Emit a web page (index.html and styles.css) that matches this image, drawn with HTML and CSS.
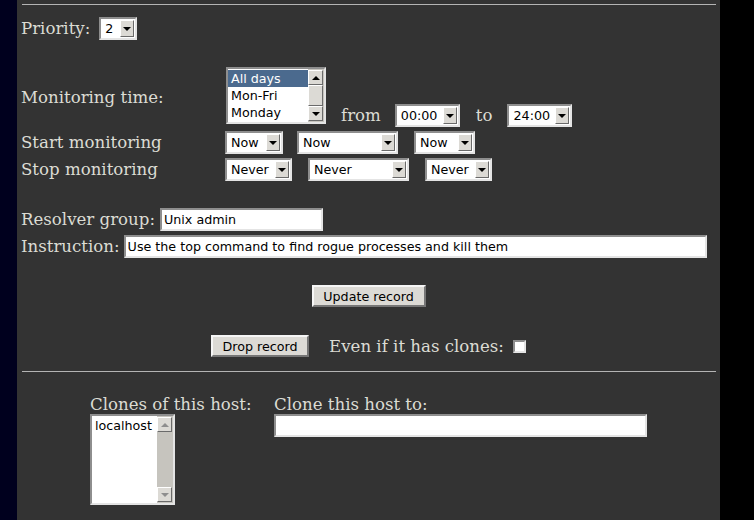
FILE: index.html
```html
<!DOCTYPE html>
<html lang="en">
<head>
<meta charset="utf-8">
<title>Host record</title>
<link rel="stylesheet" href="styles.css">
</head>
<body>
<div class="screen">
  <div class="side-left"></div>
  <main class="page">
    <hr class="rule">

    <div class="line priority-line">
      <span class="label">Priority:</span>
      <span class="combo w-priority"><select class="combo-select"><option>2</option></select><span class="combo-btn"></span></span>
    </div>

    <div class="schedule">
      <span class="label">Monitoring time:</span>
      <div class="controls controls-time">
        <div class="listbox days">
          <ul class="listbox-items">
            <li class="is-selected">All days</li>
            <li>Mon-Fri</li>
            <li>Monday</li>
          </ul>
          <div class="scrollbar">
            <span class="sb-btn sb-up"></span>
            <span class="sb-thumb"></span>
            <span class="sb-btn sb-down"></span>
          </div>
        </div>
        <span class="word word-from">from</span>
        <span class="combo w-time"><select class="combo-select"><option>00:00</option></select><span class="combo-btn"></span></span>
        <span class="word word-to">to</span>
        <span class="combo w-time"><select class="combo-select"><option>24:00</option></select><span class="combo-btn"></span></span>
      </div>

      <span class="label">Start monitoring</span>
      <div class="controls controls-start">
        <span class="combo w-now1"><select class="combo-select"><option>Now</option></select><span class="combo-btn"></span></span>
        <span class="combo w-mid"><select class="combo-select"><option>Now</option></select><span class="combo-btn"></span></span>
        <span class="combo w-now3"><select class="combo-select"><option>Now</option></select><span class="combo-btn"></span></span>
      </div>

      <span class="label">Stop monitoring</span>
      <div class="controls">
        <span class="combo w-never"><select class="combo-select"><option>Never</option></select><span class="combo-btn"></span></span>
        <span class="combo w-mid"><select class="combo-select"><option>Never</option></select><span class="combo-btn"></span></span>
        <span class="combo w-never"><select class="combo-select"><option>Never</option></select><span class="combo-btn"></span></span>
      </div>
    </div>

    <div class="line resolver-line">
      <span class="label">Resolver group:</span>
      <input class="field w-resolver" type="text" value="Unix admin">
    </div>
    <div class="line instruction-line">
      <span class="label">Instruction:</span>
      <input class="field w-instruction" type="text" value="Use the top command to find rogue processes and kill them">
    </div>

    <div class="center-line update-line">
      <button class="btn btn-update" type="button">Update record</button>
    </div>

    <div class="center-line drop-line">
      <button class="btn btn-drop" type="button">Drop record</button>
      <span class="label drop-note">Even if it has clones:</span>
      <span class="checkbox"></span>
    </div>

    <hr class="rule rule-lower">

    <div class="clones">
      <div class="clones-col col-list">
        <span class="label">Clones of this host:</span>
        <div class="listbox hosts">
          <ul class="listbox-items">
            <li>localhost</li>
          </ul>
          <div class="scrollbar">
            <span class="sb-btn sb-up is-disabled"></span>
            <span class="sb-trough"></span>
            <span class="sb-btn sb-down is-disabled"></span>
          </div>
        </div>
      </div>
      <div class="clones-col col-target">
        <span class="label">Clone this host to:</span>
        <input class="field w-clone" type="text" value="">
      </div>
    </div>
  </main>
  <div class="side-right"></div>
</div>
</body>
</html>
```

FILE: styles.css
```css
* { box-sizing: border-box; }

html, body {
  margin: 0;
  padding: 0;
  background: #000;
}

.screen {
  display: flex;
  height: 520px;
  overflow: hidden;
}

.side-left {
  flex: none;
  width: 17px;
  background: #00001e;
}

.side-right {
  flex: 1;
  background: #000;
}

.page {
  flex: none;
  width: 703px;
  background: #333333;
  padding: 4px 4px 0 4px;
  color: #dcdcd4;
  font-family: "DejaVu Serif", serif;
  font-size: 16.6px;
  line-height: 19px;
}

.rule {
  height: 0;
  margin: 0 0 0 1px;
  border: 0;
  border-top: 1px solid #b4b4b4;
}

.label {
  white-space: nowrap;
}

.line {
  display: flex;
  align-items: center;
  gap: 4px;
  height: 23px;
}

.priority-line { margin-top: 12px; gap: 9px; }
.resolver-line { margin-top: 27px; gap: 5px; }
.instruction-line { margin-top: 4px; }

/* schedule grid */
.schedule {
  margin-top: 27px;
  display: grid;
  grid-template-columns: 204px auto;
  row-gap: 4px;
  align-items: center;
}

.controls {
  display: flex;
  align-items: center;
  height: 23px;
  gap: 16px;
}

.controls-start { gap: 14px; }
.controls-start .w-now3 { margin-left: 2px; }

.controls-time {
  height: 60px;
  align-items: flex-end;
  gap: 0;
}

.word { line-height: 23px; }
.word-from { margin: 0 14px 0 15px; }
.word-to { margin: 0 15px 0 16px; }

/* combo boxes */
.combo {
  position: relative;
  display: inline-block;
  flex: none;
  height: 23px;
  background: #fff;
  border: 2px solid;
  border-color: #8e8e8e #e4e4e4 #e4e4e4 #8e8e8e;
}

.combo-select {
  appearance: none;
  -webkit-appearance: none;
  display: block;
  width: 100%;
  height: 100%;
  margin: 0;
  border: 0;
  padding: 0 0 0 4px;
  background: transparent;
  color: #000;
  font-family: "DejaVu Sans", sans-serif;
  font-size: 12.7px;
  outline: none;
}

.combo-btn {
  position: absolute;
  top: 1px;
  right: 1px;
  bottom: 1px;
  width: 14px;
  display: flex;
  align-items: center;
  justify-content: center;
  background: #dcdad5;
  border: 1px solid;
  border-color: #ffffff #6a6a6a #6a6a6a #ffffff;
  pointer-events: none;
}

.combo-btn::before {
  content: "";
  border-left: 4px solid transparent;
  border-right: 4px solid transparent;
  border-top: 4px solid #000;
}

.w-priority { width: 38px; }
.w-time { width: 65px; }
.w-now1 { width: 58px; }
.w-now3 { width: 61px; }
.w-mid { width: 101px; }
.w-never { width: 67px; }

/* list boxes */
.listbox {
  display: flex;
  flex: none;
  background: #fff;
  border: 2px solid;
  border-color: #8e8e8e #e4e4e4 #e4e4e4 #8e8e8e;
}

.days {
  width: 100px;
  height: 57px;
  margin-bottom: 3px;
  margin-left: 1px;
}

.hosts {
  width: 85px;
  height: 91px;
}

.listbox-items {
  flex: 1;
  margin: 0;
  padding: 1px 0 0 0;
  list-style: none;
  font-family: "DejaVu Sans", sans-serif;
  font-size: 12.7px;
  color: #000;
}

.listbox-items li {
  height: 17px;
  line-height: 17px;
  padding-left: 3px;
  white-space: nowrap;
}

.listbox-items li.is-selected {
  background: #4b6a8e;
  color: #fff;
}

.scrollbar {
  flex: none;
  width: 16px;
  display: flex;
  flex-direction: column;
  background: #c6c4be;
  padding: 1px 1px 1px 0;
}

.sb-btn {
  flex: none;
  height: 15px;
  display: flex;
  align-items: center;
  justify-content: center;
  background: #dcdad5;
  border: 1px solid;
  border-color: #ffffff #6a6a6a #6a6a6a #ffffff;
}

.sb-up::before {
  content: "";
  border-left: 4px solid transparent;
  border-right: 4px solid transparent;
  border-bottom: 4px solid #000;
}

.sb-down::before {
  content: "";
  border-left: 4px solid transparent;
  border-right: 4px solid transparent;
  border-top: 4px solid #000;
}

.sb-btn.is-disabled::before { border-top-color: #8e8e8e; border-bottom-color: #8e8e8e; }
.sb-up.is-disabled::before { border-top-color: transparent; }
.sb-down.is-disabled::before { border-bottom-color: transparent; }

.sb-thumb {
  flex: none;
  height: 21px;
  background: #dcdad5;
  border: 1px solid;
  border-color: #ffffff #6a6a6a #6a6a6a #ffffff;
}

.sb-thumb + .sb-btn { margin-top: auto; }
.sb-trough { flex: 1; }

/* text fields */
.field {
  flex: none;
  height: 23px;
  margin: 0;
  padding: 0 2px;
  background: #fff;
  color: #000;
  border: 2px solid;
  border-color: #8e8e8e #e4e4e4 #e4e4e4 #8e8e8e;
  font-family: "DejaVu Sans", sans-serif;
  font-size: 12.7px;
  outline: none;
}

.w-resolver { width: 163px; }
.w-instruction { width: 583px; }
.w-clone { width: 373px; }

/* buttons */
.center-line {
  display: flex;
  justify-content: center;
  align-items: center;
  height: 22px;
}

.update-line { margin-top: 27px; }
.drop-line { margin-top: 28px; }

.btn {
  height: 22px;
  margin: 0;
  padding: 0 9px;
  background: #dcdad5;
  color: #000;
  border: 2px solid;
  border-color: #f6f6f6 #767676 #767676 #f6f6f6;
  font-family: "DejaVu Sans", sans-serif;
  font-size: 12.7px;
}

.btn-update { width: 114px; }
.btn-drop { width: 98px; }

.drop-note { margin-left: 20px; }

.checkbox {
  width: 13px;
  height: 13px;
  margin-left: 9px;
  background: #fff;
  border: 2px solid;
  border-color: #8e8e8e #e4e4e4 #e4e4e4 #8e8e8e;
}

.rule-lower { margin-top: 14px; }

/* clones */
.clones {
  margin-top: 23px;
  display: flex;
  justify-content: center;
}

.clones-col {
  display: flex;
  flex-direction: column;
  align-items: flex-start;
}

.col-list { width: 184px; }
.col-target { width: 373px; }
```
